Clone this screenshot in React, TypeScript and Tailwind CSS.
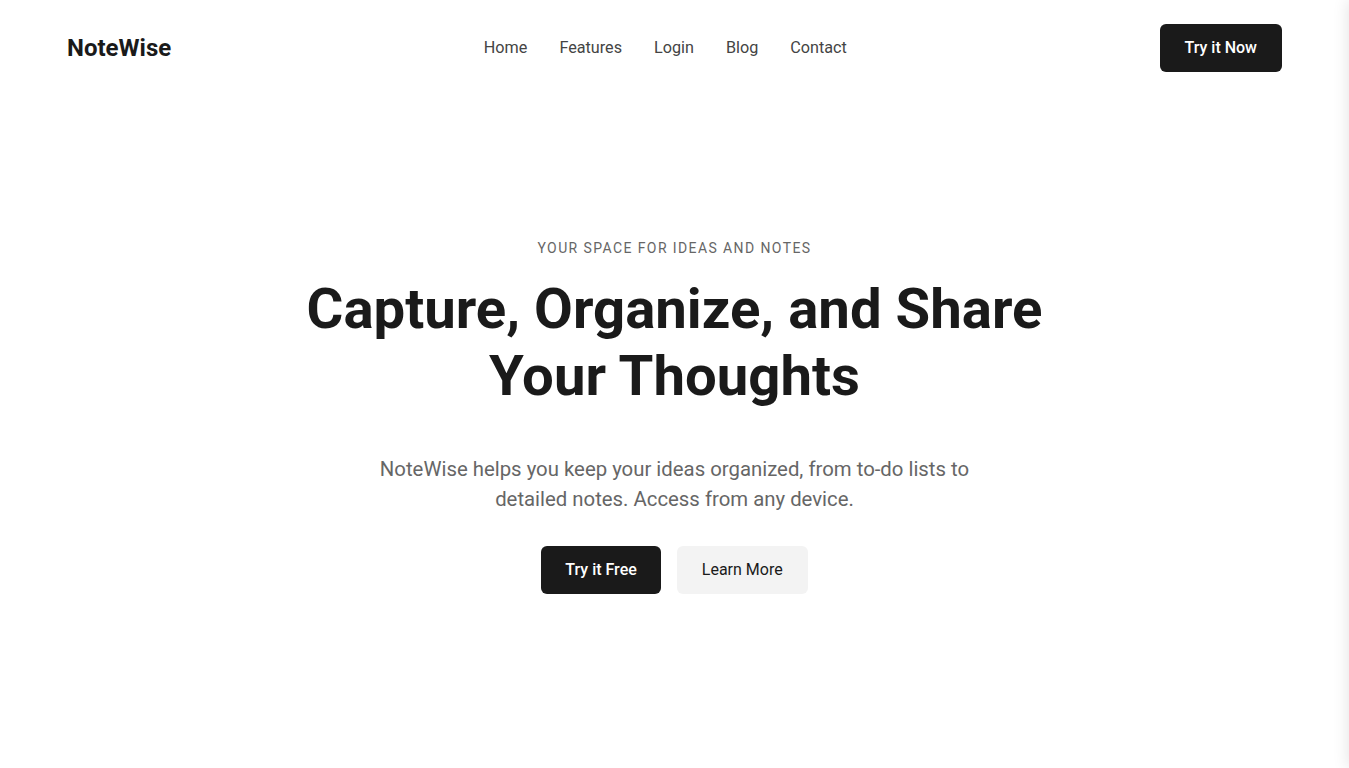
export default function App() {
  return (
    <div className="relative min-h-screen overflow-hidden bg-white font-['Roboto',sans-serif] text-[#1a1a1a]">
      {/* header */}
      <header className="flex items-center justify-between px-[67px] pt-6">
        <a href="#" className="text-2xl font-bold">
          NoteWise
        </a>
        <nav className="flex items-center gap-8 text-[16.2px] text-[#444]">
          <a href="#">Home</a>
          <a href="#">Features</a>
          <a href="#">Login</a>
          <a href="#">Blog</a>
          <a href="#">Contact</a>
        </nav>
        <button className="h-12 rounded-md bg-[#1a1a1a] px-[25px] text-base font-medium text-white">
          Try it Now
        </button>
      </header>

      {/* hero */}
      <section className="flex flex-col items-center pt-[166px] text-center">
        <p className="text-sm uppercase leading-5 tracking-[0.1em] text-[#666]">
          Your space for ideas and notes
        </p>
        <h1 className="mt-[18px] text-[56.3px] font-bold leading-[67px]">
          Capture, Organize, and Share
          <br />
          Your Thoughts
        </h1>
        <p className="mt-[44px] max-w-[620px] text-[20.35px] leading-[30px] text-[#666]">
          NoteWise helps you keep your ideas organized, from to-do lists to detailed notes. Access from any device.
        </p>
        <div className="mt-8 flex gap-4">
          <button className="h-12 rounded-md bg-[#1a1a1a] px-6 text-base font-medium text-white">Try it Free</button>
          <button className="h-12 rounded-md bg-[#f3f3f3] px-[25px] text-base text-[#1a1a1a]">Learn More</button>
        </div>
      </section>

      {/* off-screen panel shadow on the right edge */}
      <div className="pointer-events-none fixed top-0 right-[-400px] h-full w-[400px] shadow-[0_0_16px_rgba(0,0,0,0.12)]" />
    </div>
  );
}
